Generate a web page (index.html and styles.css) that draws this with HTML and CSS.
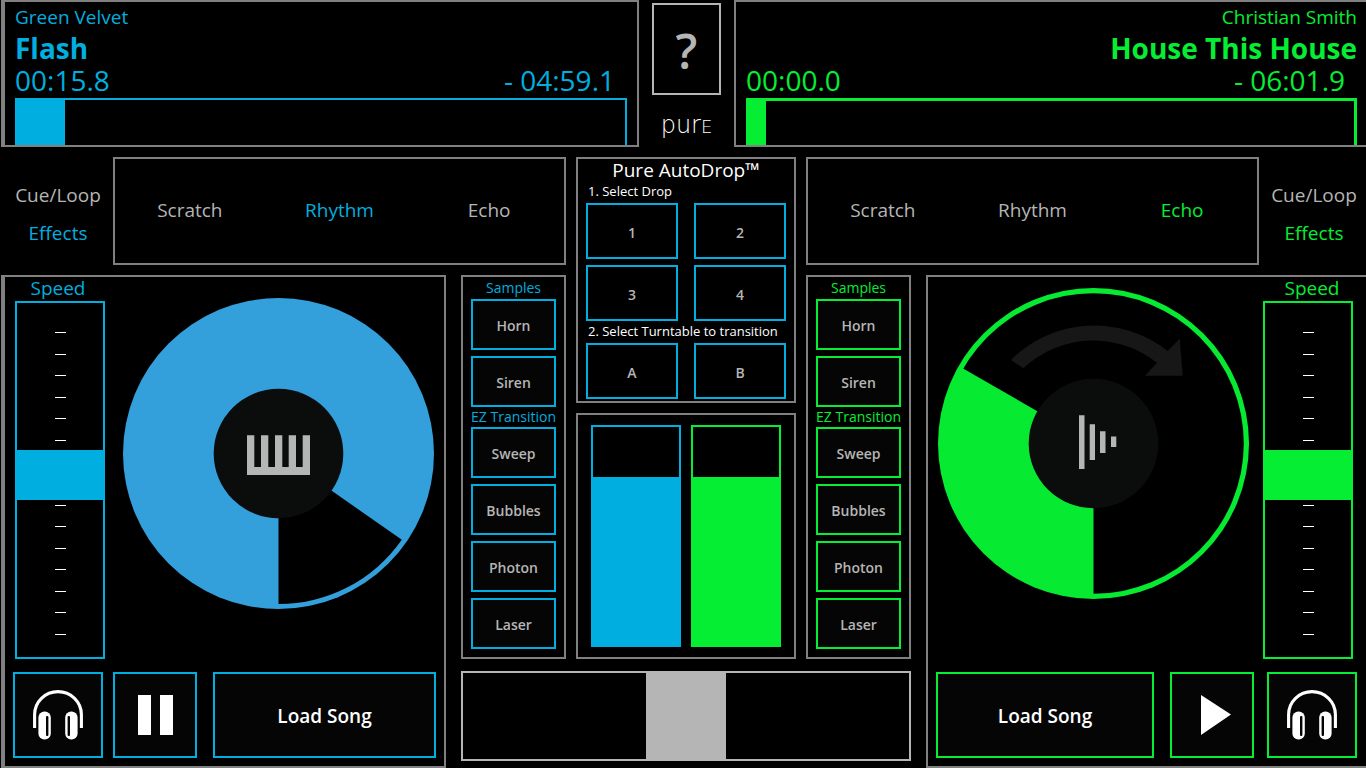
FILE: index.html
```html
<!DOCTYPE html>
<html lang="en">
<head>
<meta charset="utf-8">
<meta name="viewport" content="width=device-width, initial-scale=1">
<title>Pure DJ</title>
<link rel="stylesheet" href="styles.css">
</head>
<body>
<svg class="defs" aria-hidden="true">
  <symbol id="headphones" viewBox="0 0 50 50">
    <path d="M1.6 38V24.6a23.4 23 0 0 1 46.8 0V38" fill="none" stroke="#fff" stroke-width="3.1"/>
    <rect x="5.4" y="21.4" width="12.4" height="28.2" rx="6" fill="#fff"/>
    <rect x="32.2" y="21.4" width="12.4" height="28.2" rx="6" fill="#fff"/>
    <rect x="13" y="26" width="2.4" height="20" rx="1" fill="#050505"/>
    <rect x="34.6" y="26" width="2.4" height="20" rx="1" fill="#050505"/>
  </symbol>
</svg>
<div class="app">
  <header class="header">
    <section class="track track-a" aria-label="Deck A track">
      <p class="artist">Green Velvet</p>
      <h2 class="title">Flash</h2>
      <div class="times"><span>00:15.8</span><span>- 04:59.1</span></div>
      <progress class="position" aria-label="Deck A position" value="79" max="1000"></progress>
    </section>
    <div class="brand">
      <button class="help" type="button" aria-label="Help">?</button>
      <div class="logo">pur<span class="logo-e">E</span></div>
    </div>
    <section class="track track-b" aria-label="Deck B track">
      <p class="artist">Christian Smith</p>
      <h2 class="title">House This House</h2>
      <div class="times"><span>00:00.0</span><span>- 06:01.9</span></div>
      <progress class="position" aria-label="Deck B position" value="28" max="1000"></progress>
    </section>
  </header>

  <main class="mixer">
    <div class="modes modes-a">
      <div class="tabs">
        <button type="button">Cue/Loop</button>
        <button type="button" class="active">Effects</button>
      </div>
      <div class="effects">
        <button type="button">Scratch</button>
        <button type="button" class="active">Rhythm</button>
        <button type="button">Echo</button>
      </div>
    </div>

    <section class="deck deck-a" aria-label="Deck A">
      <div class="deck-top">
        <div class="speed">
          <label for="speed-a">Speed</label>
          <div class="fader">
            <div class="ticks"><i></i><i></i><i></i><i></i><i></i><i></i><i></i><i></i><i></i><i></i><i></i><i></i><i></i><i></i><i></i></div>
            <input id="speed-a" type="range" min="0" max="1000" value="516">
          </div>
        </div>
        <div class="platter">
          <svg viewBox="0 0 311 311" role="img" aria-label="Deck A turntable">
            <circle cx="155.5" cy="155.5" r="155.5" fill="#339fdb"/>
            <path d="M155.5 155.5V306A150.5 150.5 0 0 0 278.8 241.8Z" fill="#000"/>
            <circle cx="155.5" cy="155.5" r="64.8" fill="#0b0d0c"/>
            <path d="M124 137.3h7.3V169h6.7v-31.7h7.3V169h6.7v-31.7h7.3V169h6.4v-31.7h7.3V169h6.7v-31.7h7.3V177H124Z" fill="#b5b5b5"/>
          </svg>
        </div>
      </div>
      <div class="controls">
        <button class="cue" type="button" aria-label="Headphones A"><svg width="50" height="50"><use href="#headphones"/></svg></button>
        <button class="play" type="button" aria-label="Pause"><svg width="35" height="40" viewBox="0 0 35 40"><path d="M0 0h13v40H0zM22 0h13v40H22z" fill="#fff"/></svg></button>
        <button class="load" type="button">Load Song</button>
      </div>
    </section>

    <section class="pads pads-a" aria-label="Deck A pads">
      <h3>Samples</h3>
      <div class="pad-list"><button type="button">Horn</button><button type="button">Siren</button></div>
      <h3 class="ez">EZ Transition</h3>
      <div class="pad-list"><button type="button">Sweep</button><button type="button">Bubbles</button><button type="button">Photon</button><button type="button">Laser</button></div>
    </section>

    <div class="center">
      <section class="autodrop">
        <h2>Pure AutoDrop™</h2>
        <p>1. Select Drop</p>
        <div class="drop-grid"><button type="button">1</button><button type="button">2</button><button type="button">3</button><button type="button">4</button></div>
        <p>2. Select Turntable to transition</p>
        <div class="drop-grid"><button type="button">A</button><button type="button">B</button></div>
      </section>
      <section class="volumes" aria-label="Volume">
        <input class="volume volume-a" type="range" min="0" max="100" value="77" aria-label="Volume A">
        <input class="volume volume-b" type="range" min="0" max="100" value="77" aria-label="Volume B">
      </section>
    </div>

    <section class="pads pads-b" aria-label="Deck B pads">
      <h3>Samples</h3>
      <div class="pad-list"><button type="button">Horn</button><button type="button">Siren</button></div>
      <h3 class="ez">EZ Transition</h3>
      <div class="pad-list"><button type="button">Sweep</button><button type="button">Bubbles</button><button type="button">Photon</button><button type="button">Laser</button></div>
    </section>

    <div class="modes modes-b">
      <div class="effects">
        <button type="button">Scratch</button>
        <button type="button">Rhythm</button>
        <button type="button" class="active">Echo</button>
      </div>
      <div class="tabs">
        <button type="button">Cue/Loop</button>
        <button type="button" class="active">Effects</button>
      </div>
    </div>

    <section class="deck deck-b" aria-label="Deck B">
      <div class="deck-top">
        <div class="platter">
          <svg viewBox="0 0 311 311" role="img" aria-label="Deck B turntable">
            <circle cx="155.5" cy="155.5" r="155.5" fill="#06ea31"/>
            <circle cx="155.5" cy="155.5" r="150.3" fill="#000"/>
            <path d="M155.5 155.5V307A151.5 151.5 0 0 1 24.2 80Z" fill="#06ea31"/>
            <path d="M73 72A118 118 0 0 1 229.7 63L241.7 50.7L244.7 87.7H207L219 74.7A102 102 0 0 0 85.3 80.3Z" fill="#171717"/>
            <circle cx="155.5" cy="155.5" r="64.8" fill="#0b0d0c"/>
            <path d="M141 127.3h5.5V181H141zM151.7 136.3h5.3V172h-5.3zM162 143.3h5.5V165H162zM173 148.5h5.3V159H173z" fill="#b5b5b5"/>
          </svg>
        </div>
        <div class="speed">
          <label for="speed-b">Speed</label>
          <div class="fader">
            <div class="ticks"><i></i><i></i><i></i><i></i><i></i><i></i><i></i><i></i><i></i><i></i><i></i><i></i><i></i><i></i><i></i></div>
            <input id="speed-b" type="range" min="0" max="1000" value="516">
          </div>
        </div>
      </div>
      <div class="controls">
        <button class="load" type="button">Load Song</button>
        <button class="play" type="button" aria-label="Play"><svg width="38" height="40" viewBox="0 0 38 40"><path d="M8 0L38 19.5L8 40Z" fill="#fff"/></svg></button>
        <button class="cue" type="button" aria-label="Headphones B"><svg width="50" height="50"><use href="#headphones"/></svg></button>
      </div>
    </section>

    <div class="crossfade">
      <input class="crossfader" type="range" min="0" max="100" value="50" aria-label="Crossfader">
    </div>
  </main>
</div>
</body>
</html>
```
FILE: styles.css
```css
:root {
  --blue: #00aedf;
  --green: #06ee33;
  --line: #808080;
  --silver: #b5b5b5;
}

* { box-sizing: border-box; }

body {
  margin: 0;
  background: #000;
  color: #fff;
  font-family: "Open Sans", "Noto Sans", sans-serif;
}

h2, h3, p { margin: 0; font-weight: 400; }

button {
  margin: 0;
  padding: 0;
  font: inherit;
  color: var(--silver);
  background: none;
  border: 0;
}

input { margin: 0; }

.defs { display: none; }

.app {
  display: flex;
  flex-direction: column;
  min-height: 100vh;
}

.track-a, .modes-a, .deck-a, .pads-a, .autodrop, .volume-a { --accent: var(--blue); }
.track-b, .modes-b, .deck-b, .pads-b, .volume-b { --accent: var(--green); }

/* Header */
.header {
  display: grid;
  grid-template-columns: minmax(0, 639fr) 95px minmax(0, 632fr);
}

.track {
  display: flex;
  flex-direction: column;
  padding: 0 10px;
  border: 2px solid var(--line);
  color: var(--accent);
}

.track-a { margin-left: 1px; border-left-width: 4px; }
.track-b { border-right: 0; padding-right: 9px; }

.artist { font-size: 19px; line-height: 30px; }
.title { font-size: 28px; line-height: 32px; font-weight: 700; }
.track-b .artist, .track-b .title { text-align: right; }

.times {
  display: flex;
  justify-content: space-between;
  padding: 0 12px 2px 0;
  font-size: 28px;
  line-height: 32px;
}

.position {
  appearance: none;
  display: block;
  width: 100%;
  height: 47px;
  background: #000;
  border: 2px solid var(--accent);
  border-bottom: 0;
}

.track-b .position { border-width: 3px 3px 0; }
.position::-webkit-progress-bar { background: #000; }
.position::-webkit-progress-value { background: var(--accent); }

.brand {
  display: flex;
  flex-direction: column;
  align-items: center;
  padding-top: 3px;
}

.help {
  width: 69px;
  height: 92px;
  padding-top: 4px;
  border: 2px solid var(--silver);
  font-size: 48px;
  font-weight: 600;
  line-height: 84px;
}

.logo {
  margin-top: 16px;
  font-family: "DejaVu Sans", sans-serif;
  font-size: 24px;
  font-weight: 200;
  line-height: 28px;
}

.logo-e { font-size: 18px; }

/* Mixer */
.mixer {
  flex: 1;
  display: grid;
  grid-template-columns: minmax(0, 451fr) 105px 220px 105px minmax(0, 445fr);
  grid-template-rows: 108px 1fr auto;
  gap: 10px;
  margin-top: 10px;
}

.modes { display: flex; font-size: 19px; }
.modes-a { grid-area: 1 / 1 / 2 / 3; }
.modes-b { grid-area: 1 / 4 / 2 / 6; }
.active { color: var(--accent); }

.tabs {
  flex: none;
  display: flex;
  flex-direction: column;
  justify-content: center;
  width: 113px;
  padding: 6px 0 0 3px;
}

.modes-b .tabs { width: 107px; }
.tabs button { height: 38px; }

.effects {
  flex: 1;
  display: grid;
  grid-template-columns: repeat(3, 1fr);
  padding-bottom: 2px;
  border: 2px solid var(--line);
}

.deck {
  display: flex;
  flex-direction: column;
  border: 2px solid var(--line);
}

.deck-a { grid-area: 2 / 1 / 4 / 2; margin: 0 5px 0 1px; border-left-width: 4px; }
.deck-b { grid-area: 2 / 5 / 4 / 6; margin-left: 5px; border-right: 0; }

.deck-top { flex: 1; display: flex; }
.deck-a .deck-top { padding-left: 10px; }
.deck-b .deck-top { padding-right: 13px; }

.speed {
  flex: none;
  display: flex;
  flex-direction: column;
  width: 90px;
  color: var(--accent);
}

.speed label {
  padding: 0 0 2px 8px;
  font-size: 19px;
  line-height: 22px;
  text-align: center;
}

.deck-a .speed label { padding-left: 0; padding-right: 4px; }

.fader {
  flex: 1;
  display: grid;
  grid-template-columns: 100%;
  grid-template-rows: 100%;
  min-height: 250px;
  border: 2px solid var(--accent);
}

.fader > * { grid-area: 1 / 1; }

.ticks {
  display: flex;
  flex-direction: column;
  justify-content: space-between;
  align-items: center;
  padding: 29px 0 22px;
}

.ticks i { width: 11px; height: 1px; background: #fff; }

.fader input {
  appearance: none;
  writing-mode: vertical-lr;
  direction: rtl;
  width: 100%;
  height: 100%;
  background: none;
}

.fader input::-webkit-slider-thumb {
  appearance: none;
  width: 86px;
  height: 50px;
  background: var(--accent);
}

.platter { flex: 1; display: flex; justify-content: center; align-items: flex-start; }
.platter svg { width: 311px; max-width: 100%; }
.deck-a .platter { padding: 21px 0 0 8px; }
.deck-b .platter { padding: 11px 4px 0 0; }

.controls {
  display: flex;
  padding: 13px 8px 8px;
}

.deck-b .controls { padding-right: 9px; }

.controls button {
  display: flex;
  align-items: center;
  justify-content: center;
  height: 86px;
  border: 2px solid var(--accent);
  background: #050505;
  color: #fff;
}

.controls .cue { width: 90px; }
.controls .play { width: 84px; }
.controls .load { flex: 1; padding-top: 2px; font-size: 19px; font-weight: 600; }
.deck-a .play { margin: 0 16px 0 10px; }
.deck-b .play { margin: 0 13px 0 16px; }

/* Sample pads */
.pads {
  padding: 0 8px 8px;
  border: 2px solid var(--line);
}

.pads-a { grid-area: 2 / 2; }
.pads-b { grid-area: 2 / 4; }

.pads h3 {
  display: flex;
  justify-content: center;
  color: var(--accent);
  font-size: 14px;
  line-height: 22px;
  white-space: nowrap;
}

.pads .ez { line-height: 20px; }

.pad-list { display: grid; gap: 6px; }

.pad-list button {
  height: 51px;
  padding-top: 2px;
  border: 2px solid var(--accent);
  background: #050505;
  font-size: 14px;
  font-weight: 600;
}

/* Center column */
.center {
  grid-area: 1 / 3 / 3 / 4;
  display: grid;
  grid-template-rows: 1fr 1fr;
  gap: 10px;
}

.autodrop {
  padding: 0 8px 2px;
  border: 2px solid var(--line);
}

.autodrop h2 { font-size: 19px; line-height: 22px; text-align: center; }
.autodrop p { padding-left: 2px; font-size: 13px; line-height: 20px; padding-bottom: 2px; white-space: nowrap; }

.drop-grid {
  display: grid;
  grid-template-columns: 1fr 1fr;
  gap: 6px 16px;
}

.drop-grid button {
  height: 56px;
  padding-top: 2px;
  border: 2px solid var(--accent);
  font-size: 14px;
  font-weight: 600;
}

.volumes {
  display: grid;
  grid-template-columns: 1fr 1fr;
  gap: 10px;
  padding: 10px 13px;
  border: 2px solid var(--line);
}

.volume {
  appearance: none;
  writing-mode: vertical-lr;
  direction: rtl;
  width: 100%;
  height: 100%;
  border: 2px solid var(--accent);
  background: linear-gradient(to top, var(--accent) 77%, #000 77%);
}

.volume::-webkit-slider-thumb {
  appearance: none;
  width: 86px;
  height: 2px;
  background: transparent;
}

.crossfade { grid-area: 3 / 2 / 4 / 5; padding: 2px 0 7px; }

.crossfader {
  appearance: none;
  display: block;
  width: 100%;
  height: 90px;
  border: 2px solid var(--silver);
  background: #000;
}

.crossfader::-webkit-slider-thumb {
  appearance: none;
  width: 80px;
  height: 86px;
  background: var(--silver);
}
```
